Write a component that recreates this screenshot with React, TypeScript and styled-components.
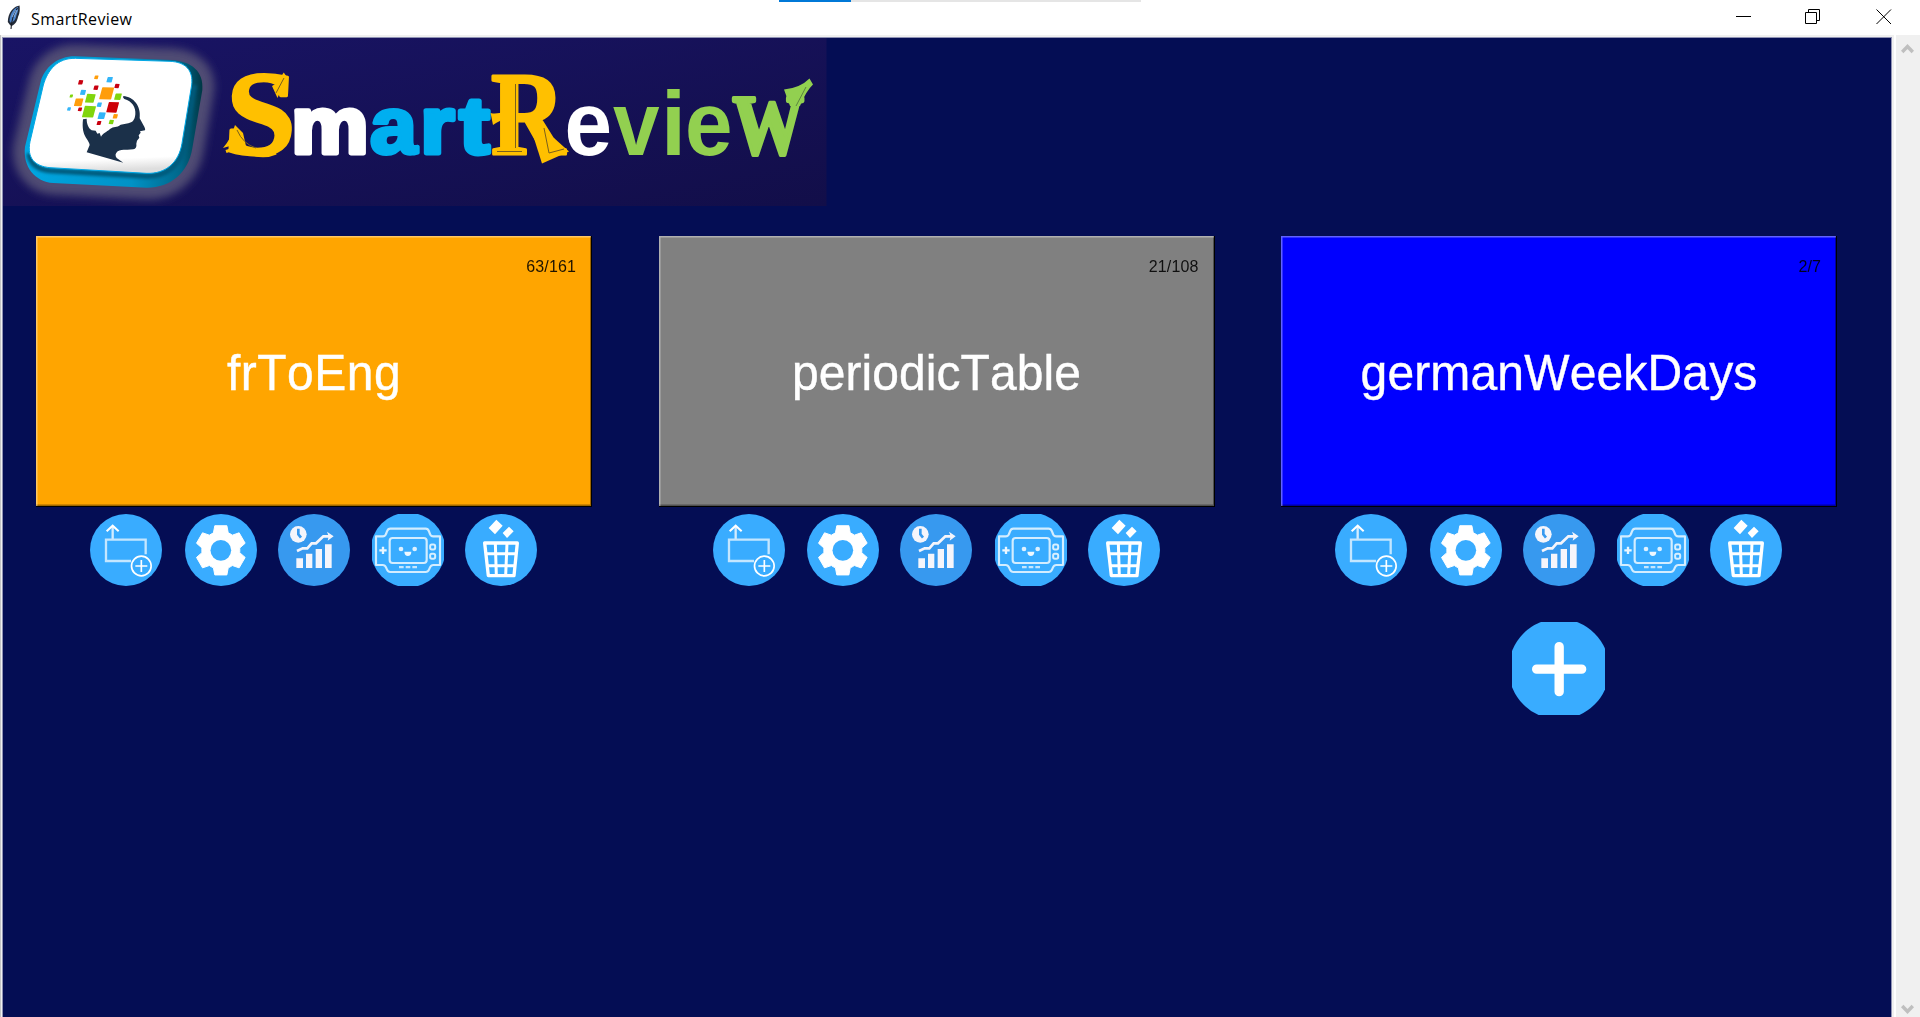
import React from "react";
import styled, { createGlobalStyle } from "styled-components";

const GlobalStyle = createGlobalStyle`
  * { box-sizing: border-box; }
  body { margin: 0; overflow: hidden; background: #fff; font-family: "Liberation Sans", Arial, sans-serif; }
  svg { display: block; }
`;

const BLUE = "#39acff";

const Window = styled.div`
  position: relative;
  display: flex;
  flex-direction: column;
  width: 1920px;
  height: 1017px;
  overflow: hidden;
`;

const LoadingBar = styled.div`
  position: absolute;
  top: 0;
  left: 779px;
  width: 362px;
  height: 2px;
  background: linear-gradient(to right, #0078d7 72px, #e5e5e5 72px);
`;

const TitleBar = styled.header`
  display: flex;
  align-items: center;
  height: 35px;
  flex: none;
  padding: 0 28px 0 7px;
  background: #fff;
`;

const AppTitle = styled.span`
  flex: 1;
  margin-left: 10px;
  padding-top: 3px;
  font: 16px/22px "Open Sans", "Noto Sans", sans-serif;
  letter-spacing: 0.4px;
  color: #000;
`;

const WindowButtons = styled.div`
  display: flex;
  gap: 53px;
  padding-bottom: 1px;
`;

const WindowButton = styled.svg`
  width: 16px;
  height: 16px;
  fill: none;
  stroke: #000;

  &:last-child {
    margin-left: 2px;
  }
`;

const Body = styled.div`
  display: flex;
  flex: 1;
  min-height: 0;
  padding-top: 2px;
  background: #f0f0f0;
  border-left: 1px solid #c4c4c4;
`;

const Canvas = styled.main`
  display: flex;
  flex-direction: column;
  width: 1890px;
  margin-left: 1px;
  border: 1px solid #8f92b4;
  border-bottom: 0;
  background: #040d54;
`;

const Scrollbar = styled.aside`
  display: flex;
  flex: 1;
  flex-direction: column;
  justify-content: space-between;
  align-items: center;
  margin: -2px 0 0 2px;
  padding: 8px 1px 2px 0;
  border-left: 2px solid #fff;
  background: #f0f0f0;
`;

const Chevron = styled.svg`
  width: 13px;
  height: 11px;
  fill: none;
  stroke: #bfbfbf;
  stroke-width: 3.4;
`;

const Banner = styled.svg`
  width: 824px;
  height: 168px;
  flex: none;
`;

const DeckGrid = styled.section`
  display: grid;
  grid-template-columns: repeat(3, 556px);
  column-gap: 66.5px;
  padding: 30px 0 0 33px;
`;

const Deck = styled.article`
  display: flex;
  flex-direction: column;
  align-items: center;
`;

const DeckCard = styled.div<{ $color: string }>`
  display: flex;
  flex-direction: column;
  width: 556px;
  height: 271px;
  background: ${(p) => p.$color};
  box-shadow:
    inset -1px -1px 0 #000,
    inset 1.5px 1.5px 0 rgba(255, 255, 255, 0.38),
    inset -2px -2.5px 0 rgba(0, 0, 0, 0.38);
`;

const Progress = styled.span`
  align-self: flex-end;
  margin: 21px 16px 0 0;
  font-size: 16px;
  line-height: 20px;
  letter-spacing: 0.12px;
  color: #000;
  opacity: 0.88;
`;

const DeckName = styled.span<{ $tracking: number }>`
  margin-top: 67.5px;
  font-size: 48px;
  line-height: 56px;
  letter-spacing: ${(p) => p.$tracking}px;
  font-kerning: none;
  text-align: center;
  color: #fff;
  -webkit-text-stroke: 0.4px #fff;
  transform: scaleY(1.05);
`;

const Actions = styled.div`
  display: flex;
  gap: 21px;
  margin: 6.5px 0 0 -1px;

  > :nth-child(odd):not(:last-child) {
    margin-right: 1.5px;
  }
`;

const RoundIcon = styled.svg`
  width: 72px;
  height: 72px;
  flex: none;
  fill: none;
`;

const AddDeck = styled(RoundIcon)`
  width: 93px;
  height: 93px;
  margin: 36px 0 0 -1px;
`;

const AddCardIcon = () => (
  <RoundIcon viewBox="0 0 216 216">
    <circle cx="108" cy="108" r="108" fill={BLUE} />
    <path d="M68 36V76" stroke="#d3ecff" strokeWidth="7" />
    <path d="M50 52L68 35L86 52" stroke="#fff" strokeWidth="6" />
    <path d="M167 121V77H48V141H123" stroke="#c4e6ff" strokeWidth="7" />
    <circle cx="154" cy="156" r="29.5" stroke="#fff" strokeWidth="5" />
    <path d="M136 156h36M154 138v36" stroke="#fff" strokeWidth="5" />
  </RoundIcon>
);

const gearPath = (() => {
  const at = (r: number, a: number) =>
    `${(107.5 + r * Math.sin(a)).toFixed(1)} ${(109 - r * Math.cos(a)).toFixed(1)}`;
  let d = "";
  for (let i = 0; i < 6; i++) {
    const a = (i * Math.PI) / 3;
    d += `${i ? "A58 58 0 0 1" : "M"}${at(57, a - 0.4)}L${at(76, a - 0.24)}L${at(76, a + 0.24)}L${at(57, a + 0.4)}`;
  }
  return d + "Z";
})();

const SettingsIcon = () => (
  <RoundIcon viewBox="0 0 216 216">
    <circle cx="108" cy="108" r="108" fill={BLUE} />
    <path d={gearPath} fill="#fff" stroke="#fff" strokeWidth="3" strokeLinejoin="round" />
    <circle cx="107.5" cy="109" r="31" fill={BLUE} />
  </RoundIcon>
);

const StatsIcon = () => (
  <RoundIcon viewBox="0 0 216 216">
    <circle cx="108" cy="108" r="108" fill="#3799ef" />
    <circle cx="61" cy="61" r="25" fill="#f5f5fb" />
    <path d="M61 44V61L69 71" stroke="#3799ef" strokeWidth="8" />
    <path d="M57 111L74 103H88L101 88H114L136 67H156" stroke="#f5f5fb" strokeWidth="8" />
    <path d="M147 53L167 67L149 80L152 67Z" fill="#f5f5fb" />
    <path d="M55 133h20v29h-20zM84 119h19v43h-19zM113 105h19v57h-19zM141 91h20v71h-20z" fill="#f5f5fb" />
  </RoundIcon>
);

const GameIcon = () => (
  <RoundIcon viewBox="0 0 216 216">
    <circle cx="108" cy="108" r="112" fill={BLUE} />
    <g stroke="#d3edff" strokeWidth="6.5" strokeLinejoin="round">
      <path d="M12 67H32Q40 67 42 60L45 52Q48 44 55 44H161Q168 44 171 52L174 60Q176 67 184 67H204V153H184Q177 153 174 160L171 167Q168 174 161 174H55Q48 174 45 167L42 160Q39 153 32 153H12V67Z" />
      <rect x="53" y="72" width="111" height="75" rx="9" />
    </g>
    <path d="M33 98v22M22 109h22" stroke="#eaf6ff" strokeWidth="7" />
    <circle cx="87" cy="105" r="7" fill="#dff1ff" />
    <circle cx="128" cy="105" r="7" fill="#dff1ff" />
    <path d="M97 113h21q-1 13-10.500 13T97 113Z" fill="#eff8ff" />
    <rect x="174.500" y="91.500" width="15" height="15" rx="5" stroke="#d8efff" strokeWidth="6" />
    <rect x="174.500" y="119" width="15" height="15" rx="5" stroke="#d8efff" strokeWidth="6" />
    <path d="M81 159.500h14M101 159.500h14M121 159.500h14" stroke="#c4e6ff" strokeWidth="7" />
  </RoundIcon>
);

const TrashIcon = () => (
  <RoundIcon viewBox="0 0 216 216">
    <circle cx="108" cy="108" r="108" fill={BLUE} />
    <path d="M94 17L113 35L90 61L71 42ZM132 38L146 52L126 72L113 57Z" fill="#fff" />
    <path d="M59 87H157L147 185H70Z" stroke="#fff" strokeWidth="10" strokeLinejoin="round" />
    <path d="M91 87L94 185M126 87L122 185M62 119H154M66 155H151" stroke="#fff" strokeWidth="9" />
  </RoundIcon>
);

const PlusIcon = () => (
  <AddDeck viewBox="0 0 279 279">
    <circle cx="141" cy="141" r="151" fill={BLUE} />
    <path d="M74 141.500H209M141.500 74V209" stroke="#fff" strokeWidth="28" strokeLinecap="round" />
  </AddDeck>
);

const Feather = () => (
  <svg width="14" height="25" viewBox="0 0 14 25">
    <path d="M11 1C6 2 1 8 .8 17L3 20L4.500 21C9 19 10 16 11 12C13 8 13 4 12.500 .6Z" fill="#222a38" />
    <path d="M10.500 2C6 4 3 9 2.500 16L4 18C8 16 9 13 9.500 10C11 7 11.500 4 11 2Z" fill="#4c83c9" />
    <path d="M10.500 3C7 8 4.500 14 4 24" fill="none" stroke="#1a1d26" strokeWidth="1.1" />
    <path d="M9 5L5 12M10 5L7 12" stroke="#92b9e8" strokeWidth=".8" />
  </svg>
);

/* Confetti of the key: centre x, centre y, size, colour */
const pixels: [number, number, number, string][] = [
  [242, 157, 13, "#c8000f"], [289, 142, 11, "#ff9d0a"], [329, 149, 16, "#33b5f9"],
  [351, 168, 13, "#c8000f"], [288, 173, 13, "#c8000f"], [249, 187, 15, "#33b5f9"],
  [320, 190, 36, "#ff9d0a"], [354, 200, 19, "#80d50c"], [214, 198, 9, "#80d50c"],
  [271, 205, 26, "#80d50c"], [236, 217, 23, "#ff9d0a"], [298, 224, 13, "#33b5f9"],
  [338, 232, 31, "#cd0008"], [207, 237, 10, "#33b5f9"], [240, 238, 11, "#c8000f"],
  [267, 245, 34, "#80d50c"], [305, 257, 20, "#33b5f9"], [346, 259, 13, "#ff9d0a"],
  [334, 276, 13, "#80d50c"], [297, 279, 12, "#c8000f"],
];

const keyBase =
  "M226 79L515 90C575 94 612 125 607 180L577 355C565 430 510 474 440 473L160 459C105 455 68 410 75 350L122 155C135 110 175 78 226 79Z";
const keyFace =
  "M226 85L510 94C556 96 580 120 575 165L546 340C536 400 495 432 440 430L150 413C105 409 80 385 90 335L130 165C143 120 172 84 226 85Z";

const Key = () => (
  <g transform="translate(0 30) scale(.33333)">
    <path d={keyBase} fill="#504b73" stroke="#504b73" strokeWidth="70" strokeLinejoin="round" filter="url(#glow)" />
    <path d={keyBase} fill="url(#side)" />
    <path d="M86 370C90 402 112 418 150 422L440 439C500 440 542 405 554 345L583 165" fill="none" stroke="#005a7c" strokeWidth="15" filter="url(#soft)" />
    <path d={keyFace} fill="url(#face)" stroke="#00a8e6" strokeWidth="3" />
    {pixels.map(([x, y, s, c]) => (
      <rect key={`${x}-${y}`} x={-s / 2} y={-s / 2} width={s} height={s} rx="1.500" fill={c}
        transform={`translate(${x} ${y}) skewX(-13) rotate(2)`} />
    ))}
    <path
      d="M249 268C246 295 250 310 258 323Q268 337 269 345L260 367L370 398L350 384Q342 374 353 364C365 356 382 361 400 358Q411 355 409 341L411 332L418 323L416 316L422 308L420 304L435 301Q437 297 430 285L419 265C424 228 400 200 370 198Q367 203 373 207C396 214 408 231 406 253C404 272 397 277 385 280L362 284C350 294 341 288 330 297C319 307 309 309 303 320L299 309L292 311L287 302L275 301C264 293 260 280 260 266Z"
      fill="#1b3049"
    />
  </g>
);

const LogoLetter = styled.text<{ $serif?: boolean; $weight?: number }>`
  font-family: ${(p) => (p.$serif ? '"Liberation Serif", serif' : '"Liberation Sans", sans-serif')};
  font-weight: 700;
  stroke-linejoin: round;
  stroke-width: ${(p) => p.$weight ?? 0}px;
`;

interface Letter {
  ch: string; x: number; size: number; sx: number; fill: string;
  y?: number; skew?: number; serif?: boolean; weight?: number;
}

const GOLD = "#ffc000";
const SKY = "#00aff0";
const LEAF = "#92d050";

const letters: Letter[] = [
  { ch: "S", x: 223, y: 154, size: 120, sx: 1.07, skew: -3, fill: GOLD, serif: true, weight: 3 },
  { ch: "m", x: 291.3, y: 152.5, size: 79, sx: 1.1, fill: "#fff", weight: 5 },
  { ch: "a", x: 370, y: 152.5, size: 79, sx: 1.07, fill: SKY, weight: 4 },
  { ch: "r", x: 420.5, y: 152.5, size: 79, sx: 1.1, fill: SKY, weight: 5 },
  { ch: "t", x: 459.5, y: 152.5, size: 79, sx: 1.14, fill: SKY, weight: 5 },
  { ch: "R", x: 491, y: 153.5, size: 119, sx: 0.86, fill: GOLD, serif: true, weight: 3 },
  { ch: "e", x: 564.5, size: 90, sx: 0.95, fill: "#fff" },
  { ch: "v", x: 613, size: 90, sx: 0.93, fill: LEAF },
  { ch: "i", x: 661, size: 90, sx: 1, fill: LEAF },
  { ch: "e", x: 685, size: 90, sx: 0.95, fill: LEAF },
  { ch: "W", x: 732.5, y: 154, size: 85, sx: 0.84, fill: LEAF, serif: true, weight: 4 },
];

/* Spurs and engraved hairlines that dress the three display capitals */
const Flourishes = () => (
  <g fill="none">
    <path d="M272 86L277 83L283.700 72.500L287 77L277.500 98Z" fill={GOLD} />
    <path d="M223 148Q231 139 235 125L243 133L246 146Q236 143 223 148Z" fill={GOLD} />
    <path d="M226 151.500Q238 147 248 152Q262 159 276 153" stroke={GOLD} strokeWidth="3" />
    <path d="M237 130Q243 144 256 148M284 78L276 93" stroke="#7a601d" strokeWidth="1" />
    <path d="M490.600 113Q498 115 506 110L518 107V116Q503 118 493 125Z" fill={GOLD} />
    <path d="M532 132L542 163.500L569 151.500L554 138Z" fill={GOLD} />
    <path d="M515.500 84V148M497 151.500H522M544 128L549 153L564 149" stroke="#7a601d" strokeWidth="1" />
    <path d="M784 89.500Q800 88 809.500 78.500L813 84.500Q806 91 800 106L790 106Z" fill={LEAF} />
    <path d="M806 87L796 106" stroke="#5b8440" strokeWidth="1" />
  </g>
);

const BannerLogo = () => (
  <Banner viewBox="3 38 824 168">
    <defs>
      <linearGradient id="bg" x1="0" y1="0" x2="1" y2="1">
        <stop offset="0" stopColor="#191465" />
        <stop offset="1" stopColor="#120e49" />
      </linearGradient>
      <linearGradient id="side" x1="0" y1="0" x2="1" y2="0">
        <stop offset="0" stopColor="#00a7e2" />
        <stop offset=".6" stopColor="#0092c6" />
        <stop offset=".88" stopColor="#00678a" />
        <stop offset="1" stopColor="#003744" />
      </linearGradient>
      <linearGradient id="face" x1="0" y1="0" x2=".06" y2="1">
        <stop offset=".9" stopColor="#fff" />
        <stop offset="1" stopColor="#dedede" />
      </linearGradient>
      <filter id="glow" x="-20%" y="-20%" width="140%" height="140%">
        <feGaussianBlur stdDeviation="13" />
      </filter>
      <filter id="soft"><feGaussianBlur stdDeviation="4" /></filter>
    </defs>
    <rect x="3" y="38" width="823.500" height="168" fill="url(#bg)" />
    <Key />
    {letters.map((l, i) => (
      <LogoLetter key={i} $serif={l.serif} $weight={l.weight} fontSize={l.size}
        fill={l.fill} stroke={l.fill}
        transform={`translate(${l.x} ${l.y ?? 155}) skewX(${l.skew ?? 0}) scale(${l.sx} 1)`}>
        {l.ch}
      </LogoLetter>
    ))}
    <Flourishes />
  </Banner>
);

const decks = [
  { name: "frToEng", progress: "63/161", color: "#ffa500", tracking: 0.5 },
  { name: "periodicTable", progress: "21/108", color: "#808080", tracking: 0.05 },
  { name: "germanWeekDays", progress: "2/7", color: "#0000ff", tracking: 0.15 },
];

export default function App() {
  return (
    <Window>
      <GlobalStyle />
      <TitleBar>
        <Feather />
        <AppTitle>SmartReview</AppTitle>
        <WindowButtons>
          <WindowButton><path d="M0 7.500H15" /></WindowButton>
          <WindowButton><path d="M.5 3.500H11.500V14.500H.5ZM3.500 3.500V.5H14.500V11.500H11.500" /></WindowButton>
          <WindowButton><path d="M.5 .5L15 15M15 .5L.5 15" /></WindowButton>
        </WindowButtons>
      </TitleBar>
      <LoadingBar />
      <Body>
        <Canvas>
          <BannerLogo />
          <DeckGrid>
            {decks.map((d, i) => (
              <Deck key={d.name}>
                <DeckCard $color={d.color}>
                  <Progress>{d.progress}</Progress>
                  <DeckName $tracking={d.tracking}>{d.name}</DeckName>
                </DeckCard>
                <Actions>
                  <AddCardIcon />
                  <SettingsIcon />
                  <StatsIcon />
                  <GameIcon />
                  <TrashIcon />
                </Actions>
                {i === decks.length - 1 && <PlusIcon />}
              </Deck>
            ))}
          </DeckGrid>
        </Canvas>
        <Scrollbar>
          <Chevron><path d="M1.200 9L6.500 3.500L11.800 9" /></Chevron>
          <Chevron><path d="M1.200 2L6.500 7.500L11.800 2" /></Chevron>
        </Scrollbar>
      </Body>
    </Window>
  );
}
